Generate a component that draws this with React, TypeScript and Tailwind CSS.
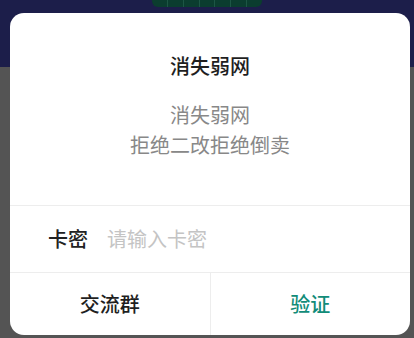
export default function App() {
  const font = { fontFamily: '"Noto Sans CJK SC", "Noto Sans", sans-serif' };
  return (
    <div className="relative h-[338px] w-[414px] overflow-hidden bg-[#545454]" style={font}>
      {/* page behind the dialog */}
      <div className="flex h-[67px] justify-center bg-[#1c1e4a]">
        <div className="flex h-[7px] w-[110px] overflow-hidden rounded-b-[6px] bg-[#0b3d2f]">
          {Array.from({ length: 7 }).map((_, i) => (
            <div key={i} className="h-full flex-1 border-r border-[#1d5645] last:border-r-0" />
          ))}
        </div>
      </div>

      <div className="absolute left-[10px] top-[13px] flex h-[322px] w-[400px] flex-col overflow-hidden rounded-[14px] bg-white">
        <div className="flex h-[192px] flex-col items-center">
          <h2 className="mt-[38px] text-[20px] font-medium leading-[30px] text-[#1f1f1f]">消失弱网</h2>
          <div className="mt-[19px] text-center text-[20px] leading-[30px] text-[#888888]">
            <p>消失弱网</p>
            <p>拒绝二改拒绝倒卖</p>
          </div>
        </div>
        <div className="flex h-[67px] items-center border-t border-[#ededed] pl-[38px]">
          <span className="w-[59px] text-[20px] font-medium text-[#222222]">卡密</span>
          <input
            className="min-w-0 flex-1 bg-transparent text-[20px] text-[#222222] outline-none placeholder:text-[#c4c4c4]"
            placeholder="请输入卡密"
          />
        </div>
        <div className="flex flex-1 border-t border-[#ededed]">
          <button className="flex flex-1 items-center justify-center border-r border-[#ededed] text-[20px] font-medium text-[#1f1f1f]">
            交流群
          </button>
          <button className="flex flex-1 items-center justify-center text-[20px] font-medium text-[#128c79]">
            验证
          </button>
        </div>
      </div>
    </div>
  );
}
